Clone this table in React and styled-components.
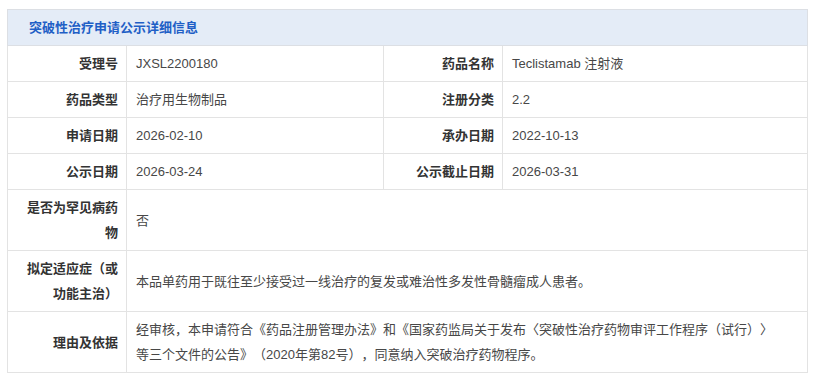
import React from "react";
import styled, { createGlobalStyle } from "styled-components";

const Global = createGlobalStyle`
  html, body { margin: 0; padding: 0; background: #fff; }
  body { font-family: "Liberation Sans", "Noto Sans CJK SC", sans-serif; }
`;

const Page = styled.div`
  padding: 9px 7px;
`;

const Table = styled.table`
  width: 800px;
  border-collapse: collapse;
  table-layout: fixed;
  font-size: 13px;
  line-height: 25px;
  text-spacing-trim: space-all;
`;

const Col = styled.col`
  width: ${(p) => p.$w}px;
`;

const HeadCell = styled.th`
  background: #e4ecf7;
  color: #1f5fc6;
  font-weight: bold;
  text-align: left;
  padding: 5px 21px;
  border: 1px solid #dcdfe4;
  height: 25px;
`;

const Label = styled.th`
  color: #333;
  font-weight: bold;
  text-align: right;
  padding: 5px 8px;
  border: 1px solid #e3e3e3;
  vertical-align: middle;
`;

const Value = styled.td`
  color: #474747;
  padding: 5px ${(p) => (p.$wide ? 24 : 9)}px 5px 9px;
  border: 1px solid #e3e3e3;
  vertical-align: middle;
`;

const rows = [
  [["受理号", "JXSL2200180"], ["药品名称", "Teclistamab 注射液"]],
  [["药品类型", "治疗用生物制品"], ["注册分类", "2.2"]],
  [["申请日期", "2026-02-10"], ["承办日期", "2022-10-13"]],
  [["公示日期", "2026-03-24"], ["公示截止日期", "2026-03-31"]],
];

const wide = [
  ["是否为罕见病药物", "否"],
  ["拟定适应症（或功能主治）", "本品单药用于既往至少接受过一线治疗的复发或难治性多发性骨髓瘤成人患者。"],
  [
    "理由及依据",
    "经审核，本申请符合《药品注册管理办法》和《国家药监局关于发布〈突破性治疗药物审评工作程序（试行）〉等三个文件的公告》（2020年第82号），同意纳入突破治疗药物程序。",
  ],
];

export default function App() {
  return (
    <Page>
      <Global />
      <Table>
        <colgroup>
          <Col $w={119} />
          <Col $w={257} />
          <Col $w={119} />
          <Col $w={305} />
        </colgroup>
        <thead>
          <tr>
            <HeadCell colSpan={4}>突破性治疗申请公示详细信息</HeadCell>
          </tr>
        </thead>
        <tbody>
          {rows.map((r, i) => (
            <tr key={i}>
              {r.map(([l, v]) => (
                <React.Fragment key={l}>
                  <Label>{l}</Label>
                  <Value>{v}</Value>
                </React.Fragment>
              ))}
            </tr>
          ))}
          {wide.map(([l, v]) => (
            <tr key={l}>
              <Label>{l}</Label>
              <Value colSpan={3} $wide>
                {v}
              </Value>
            </tr>
          ))}
        </tbody>
      </Table>
    </Page>
  );
}
